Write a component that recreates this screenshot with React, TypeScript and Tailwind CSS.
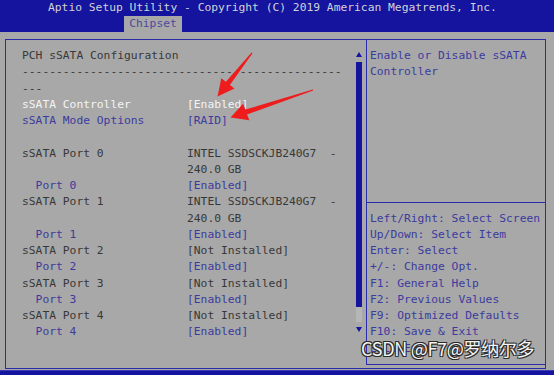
type Tone = 'dark' | 'white' | 'blue';

const toneClass: Record<Tone, string> = {
  dark: 'text-[#383838]',
  white: 'text-[#f4f4f4]',
  blue: 'text-[#3b3b9e]',
};

interface Row {
  label: string;
  value?: string;
  tone: Tone;
  full?: boolean;
}

const rows: Row[] = [
  { label: 'PCH sSATA Configuration', tone: 'dark', full: true },
  { label: '-'.repeat(47), tone: 'dark', full: true },
  { label: '---', tone: 'dark', full: true },
  { label: 'sSATA Controller', value: '[Enabled]', tone: 'white' },
  { label: 'sSATA Mode Options', value: '[RAID]', tone: 'blue' },
  { label: '', tone: 'dark' },
  { label: 'sSATA Port 0', value: 'INTEL SSDSCKJB240G7  -', tone: 'dark' },
  { label: '', value: '240.0 GB', tone: 'dark' },
  { label: '  Port 0', value: '[Enabled]', tone: 'blue' },
  { label: 'sSATA Port 1', value: 'INTEL SSDSCKJB240G7  -', tone: 'dark' },
  { label: '', value: '240.0 GB', tone: 'dark' },
  { label: '  Port 1', value: '[Enabled]', tone: 'blue' },
  { label: 'sSATA Port 2', value: '[Not Installed]', tone: 'dark' },
  { label: '  Port 2', value: '[Enabled]', tone: 'blue' },
  { label: 'sSATA Port 3', value: '[Not Installed]', tone: 'dark' },
  { label: '  Port 3', value: '[Enabled]', tone: 'blue' },
  { label: 'sSATA Port 4', value: '[Not Installed]', tone: 'dark' },
  { label: '  Port 4', value: '[Enabled]', tone: 'blue' },
];

const keyHelp = [
  'Left/Right: Select Screen',
  'Up/Down: Select Item',
  'Enter: Select',
  '+/-: Change Opt.',
  'F1: General Help',
  'F2: Previous Values',
  'F9: Optimized Defaults',
  'F10: Save & Exit',
  'ESC: Exit',
];

function Arrows() {
  // 스크린샷 위에 그려진 빨간 화살표
  return (
    <svg className="absolute inset-0 pointer-events-none" width={554} height={375} viewBox="0 0 554 375">
      <polygon
        fill="#ee1c1c"
        points="252.5,53.3 229.9,84.9 234.5,88.6 217.5,96.5 221.3,78.2 225.9,81.8 251.6,52.6"
      />
      <polygon
        fill="#ee1c1c"
        points="313.2,90.6 247,114.4 249.4,120.2 230.5,117.5 243,103.8 245.4,109.6 312.8,89.4"
      />
    </svg>
  );
}

export default function App() {
  return (
    <div className="relative w-[554px] h-[375px] flex flex-col overflow-hidden font-['DejaVu_Sans_Mono',monospace] text-[11.3px] leading-[16.25px]">
      {/* 상단 타이틀 바 */}
      <div className="h-[32px] bg-[#14149e] flex flex-col">
        <div className="pt-[1px] pl-[48px] leading-[14px] text-[#d2d2d6] whitespace-pre">
          Aptio Setup Utility - Copyright (C) 2019 American Megatrends, Inc.
        </div>
        <div className="mt-px ml-[124px] w-[58px] h-[16px] bg-[#a8a8a8] text-[#4a4a9c] text-center leading-[16px]">
          Chipset
        </div>
      </div>

      {/* 본문 */}
      <div className="flex-1 bg-[#a8a8a8] pt-[7px] pl-[5px] pr-[8px] pb-[1px]">
        <div className="h-full border border-[#2c2caa] flex">
          {/* 왼쪽 설정 목록 */}
          <div className="w-[360px] flex">
            <div className="flex-1 pl-[16px] pt-[8px]">
              {rows.map((row, i) => (
                <div key={i} className="flex h-[16.25px] whitespace-pre">
                  <span className={`${row.full ? '' : 'w-[165px] shrink-0'} ${toneClass[row.tone]}`}>
                    {row.label}
                  </span>
                  {row.value && <span className={toneClass[row.tone]}>{row.value}</span>}
                </div>
              ))}
            </div>
            {/* 스크롤바 */}
            <div className="w-[6px] mr-[4px] flex flex-col items-center">
              <svg className="mt-[12px]" width={6} height={5} viewBox="0 0 6 5">
                <polygon points="3,0 6,5 0,5" fill="#14149e" />
              </svg>
              <div className="mt-[5px] w-[6px] h-[245px] bg-[#14149e]" />
              <div className="w-[6px] h-[15px] bg-[#b6b6b6]" />
              <svg className="mt-[5px]" width={6} height={5} viewBox="0 0 6 5">
                <polygon points="0,0 6,0 3,5" fill="#14149e" />
              </svg>
            </div>
          </div>

          {/* 오른쪽 도움말 */}
          <div className="flex-1 border-l border-b border-[#2c2caa] mb-[3px] flex flex-col text-[#3b3b9e] whitespace-pre">
            <div className="pl-[3px] pt-[8px] h-[154.25px]">
              <div>Enable or Disable sSATA</div>
              <div>Controller</div>
            </div>
            <div className="h-[16.25px] flex items-center">
              <div className="w-full h-px bg-[#2c2caa]" />
            </div>
            <div className="pl-[3px]">
              {keyHelp.map((line) => (
                <div key={line}>{line}</div>
              ))}
            </div>
          </div>
        </div>
      </div>

      <div className="h-[5px] bg-[#14149e] border-t border-[#3a3ab4]" />

      <Arrows />

      {/* 워터마크 */}
      <div className="absolute left-[361px] top-[336px] font-['Noto_Sans_CJK_SC','Noto_Sans',sans-serif] text-[18px] leading-[24px] text-[#f4f4f4] tracking-[-0.3px] whitespace-pre [text-shadow:1px_1px_0_#2a2a2a,-1px_-1px_0_#2a2a2a,1px_-1px_0_#2a2a2a,-1px_1px_0_#2a2a2a]">
        CSDN @F7@罗纳尔多
      </div>
    </div>
  );
}
